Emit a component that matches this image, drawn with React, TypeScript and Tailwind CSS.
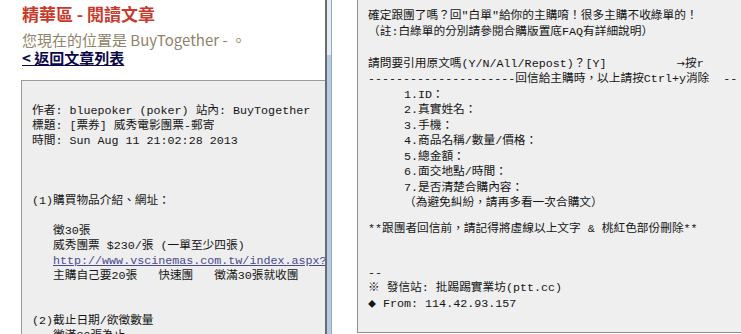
import React from "react";

const mono = "font-['Liberation_Mono','Noto_Sans_CJK_TC',monospace]";

export default function App() {
  return (
    <div className="flex h-[334px] w-[741px] overflow-hidden bg-white">
      {/* Left panel */}
      <div className="w-[325px] shrink-0 overflow-hidden">
        <div className="pl-[22px] pt-[2px] font-['Noto_Sans_CJK_TC','Liberation_Sans',sans-serif]">
          <div className="h-[24px] text-[17px] font-bold leading-[24px] text-[#c63a2b] whitespace-nowrap">
            精華區 - 閱讀文章
          </div>
          <div className="mt-[5px] h-[17px] text-[15px] leading-[17px] text-[#8f836b] whitespace-nowrap">
            您現在的位置是 BuyTogether - 。
          </div>
          <div className="mt-[1px] h-[17px] text-[15px] font-bold leading-[17px] text-[#0a0a4a] underline whitespace-nowrap">
            &lt; 返回文章列表
          </div>
        </div>
        <div
          className={`ml-[21px] mt-[14px] w-[340px] border border-[#9a9a9a] bg-[#eeeeee] pl-[10px] pt-[23px] text-[11.7px] leading-[15px] text-[#151515] whitespace-pre ${mono}`}
        >
          <div>作者: bluepoker (poker) 站內: BuyTogether</div>
          <div>標題: [票券] 威秀電影團票-郵寄</div>
          <div>時間: Sun Aug 11 21:02:28 2013</div>
          <div> </div>
          <div> </div>
          <div> </div>
          <div>(1)購買物品介紹、網址：</div>
          <div> </div>
          <div className="pl-[21px]">徵30張</div>
          <div className="pl-[21px]">威秀團票 $230/張 (一單至少四張)</div>
          <div className="pl-[21px] text-[#4a4a8c] underline">http://www.vscinemas.com.tw/index.aspx?</div>
          <div className="pl-[21px]">主購自己要20張   快速團   徵滿30張就收團</div>
          <div> </div>
          <div> </div>
          <div>(2)截止日期/欲徵數量</div>
          <div className="pl-[21px]">徵滿30張為止</div>
        </div>
      </div>

      {/* Divider / scrollbar */}
      <div className="flex h-full shrink-0">
        <div className="w-[2px] bg-[#6b6b6b]" />
        <div className="flex w-[4px] flex-col">
          <div className="h-[55px] bg-[#e4ecf4]" />
          <div className="flex-1 bg-[#b4cde6]" />
        </div>
        <div className="w-[1px] bg-[#9aa8b6]" />
      </div>

      <div className="w-[25px] shrink-0" />

      {/* Right panel */}
      <div
        className={`h-[333px] flex-1 overflow-hidden border-b border-l border-[#8e8e8e] bg-[#efefef] pl-[10px] pt-[9px] text-[11.7px] leading-[15.5px] text-[#151515] whitespace-pre ${mono}`}
      >
        <div>確定跟團了嗎？回"白單"給你的主購唷！很多主購不收綠單的！</div>
        <div>（註:白綠單的分別請參閱合購版置底FAQ有詳細說明）</div>
        <div> </div>
        <div>
          請問要引用原文嗎(Y/N/All/Repost)？[Y]          <span className="font-['DejaVu_Sans',sans-serif] text-[10px]">→</span>按r
        </div>
        <div>---------------------回信給主購時，以上請按Ctrl+y消除  --</div>
        <div className="pl-[36px]">1.ID：</div>
        <div className="pl-[36px]">2.真實姓名：</div>
        <div className="pl-[36px]">3.手機：</div>
        <div className="pl-[36px]">4.商品名稱/數量/價格：</div>
        <div className="pl-[36px]">5.總金額：</div>
        <div className="pl-[36px]">6.面交地點/時間：</div>
        <div className="pl-[36px]">7.是否清楚合購內容：</div>
        <div className="pl-[36px]">（為避免糾紛，請再多看一次合購文）</div>
        <div className="h-[10px]" />
        <div>**跟團者回信前，請記得將虛線以上文字 &amp; 桃紅色部份刪除**</div>
        <div> </div>
        <div className="h-[13px]" />
        <div>--</div>
        <div>※ 發信站: 批踢踢實業坊(ptt.cc)</div>
        <div>
          <span className="text-[8px]">◆</span> From: 114.42.93.157
        </div>
      </div>
    </div>
  );
}
